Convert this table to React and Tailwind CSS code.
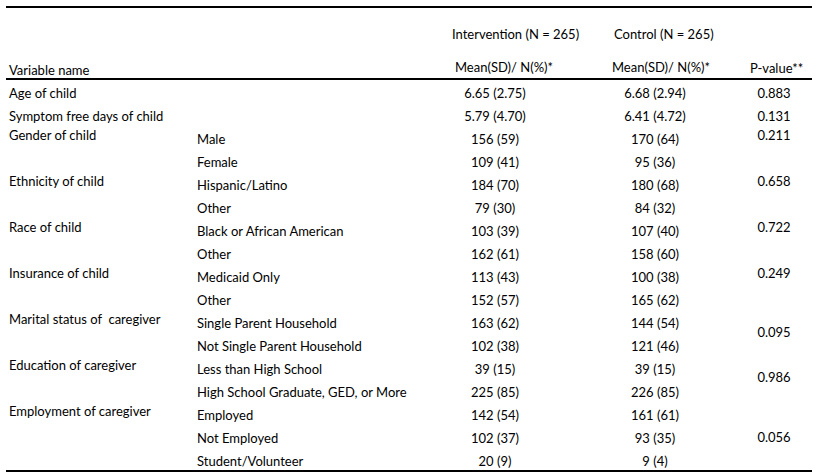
import React from "react";

const groups = [
  { label: "Age of child", p: "0.883", items: [["", "6.65 (2.75)", "6.68 (2.94)"]], single: true },
  { label: "Symptom free days of child", p: "0.131", items: [["", "5.79 (4.70)", "6.41 (4.72)"]], single: true },
  { label: "Gender of child", p: "0.211", pt: "pt-0", items: [["Male", "156 (59)", "170 (64)"], ["Female", "109 (41)", "95 (36)"]] },
  { label: "Ethnicity of child", p: "0.658", pt: "pt-0", items: [["Hispanic/Latino", "184 (70)", "180 (68)"], ["Other", "79 (30)", "84 (32)"]] },
  { label: "Race of child", p: "0.722", pt: "pt-0", items: [["Black or African American", "103 (39)", "107 (40)"], ["Other", "162 (61)", "158 (60)"]] },
  { label: "Insurance of child", p: "0.249", pt: "pt-0", items: [["Medicaid Only", "113 (43)", "100 (38)"], ["Other", "152 (57)", "165 (62)"]] },
  { label: "Marital status of\u00a0 caregiver", p: "0.095", pt: "pt-[13px]", items: [["Single Parent Household", "163 (62)", "144 (54)"], ["Not Single Parent Household", "102 (38)", "121 (46)"]] },
  { label: "Education of caregiver", p: "0.986", pt: "pt-[12px]", items: [["Less than High School", "39 (15)", "39 (15)"], ["High School Graduate, GED, or More", "225 (85)", "226 (85)"]] },
  { label: "Employment of caregiver", p: "0.056", pt: "pt-[26px]", items: [["Employed", "142 (54)", "161 (61)"], ["Not Employed", "102 (37)", "93 (35)"], ["Student/Volunteer", "20 (9)", "9 (4)"]] },
];

const spanClass = { 1: "row-span-1", 2: "row-span-2", 3: "row-span-3" };

export default function App() {
  return (
    <div className="min-h-[475px] w-[819px] bg-white text-black" style={{ fontFamily: "Lato, 'Open Sans', sans-serif" }}>
      <div className="ml-[6px] w-[806px] pt-[6px] text-[13px]">
        <div className="border-t-2 border-black" />
        <div className="grid h-[72px] grid-cols-[191px_233px_130px_190px_62px] items-end border-b-2 border-black">
          <div className="pl-[3px] leading-[15px] whitespace-nowrap">Variable name</div>
          <div />
          <div className="flex flex-col pb-[3px] leading-[15px] whitespace-nowrap">
            <div className="pl-[22px]">Intervention (N = 265)</div>
            <div className="mt-[18px] pl-[25px]">Mean(SD)/ N(%)*</div>
          </div>
          <div className="flex flex-col pb-[3px] leading-[15px] whitespace-nowrap">
            <div className="pl-[54px]">Control (N = 265)</div>
            <div className="mt-[18px] pl-[52px]">Mean(SD)/ N(%)*</div>
          </div>
          <div className="pb-[2px] pr-[12px] text-center leading-[15px] whitespace-nowrap">P-value**</div>
        </div>
        <div className="grid grid-cols-[191px_233px_130px_190px_62px] auto-rows-[23px] pt-[2px]">
          {groups.map((g, gi) => {
            const n = g.items.length;
            return (
              <React.Fragment key={gi}>
                <div className={`${spanClass[n]} col-start-1 pl-[3px] whitespace-nowrap ${g.single ? "leading-[23px]" : "leading-[15px]"}`}>
                  {g.label}
                </div>
                {g.items.map((it, ii) => (
                  <React.Fragment key={ii}>
                    <div className="col-start-2 leading-[23px] whitespace-nowrap">{it[0]}</div>
                    <div className="col-start-3 text-center leading-[23px] whitespace-nowrap">{it[1]}</div>
                    <div className="col-start-4 text-center leading-[23px] whitespace-nowrap">{it[2]}</div>
                    {ii === 0 && (
                      <div className={`${spanClass[n]} col-start-5 pr-[14px] text-center whitespace-nowrap ${g.single ? "leading-[23px]" : `leading-[15px] ${g.pt}`}`}>
                        {g.p}
                      </div>
                    )}
                  </React.Fragment>
                ))}
              </React.Fragment>
            );
          })}
        </div>
        <div className="-mt-[3px] border-t-2 border-black" />
      </div>
    </div>
  );
}
